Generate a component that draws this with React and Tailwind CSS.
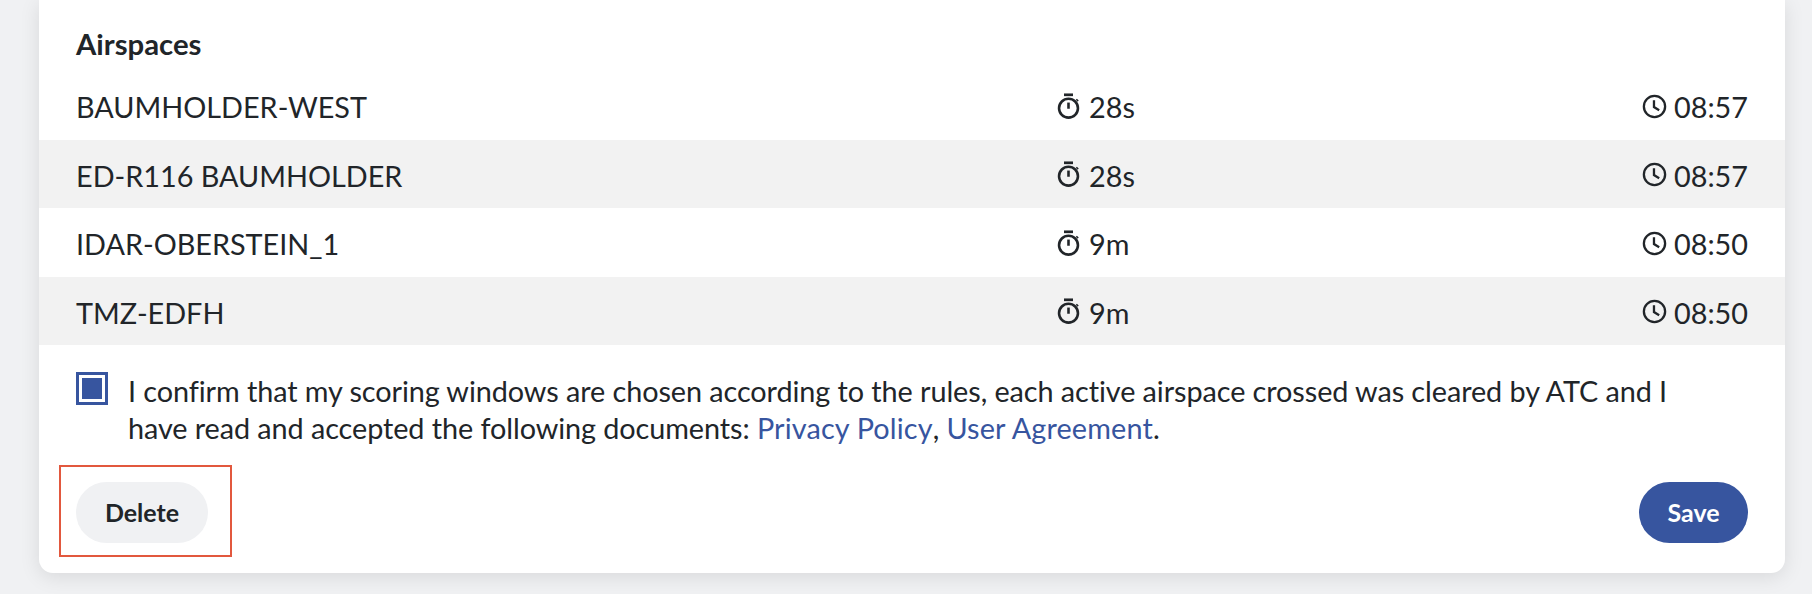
const AIRSPACES = [
  { name: "BAUMHOLDER-WEST", duration: "28s", time: "08:57" },
  { name: "ED-R116 BAUMHOLDER", duration: "28s", time: "08:57" },
  { name: "IDAR-OBERSTEIN_1", duration: "9m", time: "08:50" },
  { name: "TMZ-EDFH", duration: "9m", time: "08:50" },
];

const TimerIcon = () => (
  <svg viewBox="0 0 24 24" className="w-[27px] h-[27px] mr-[7px] -mt-[3px] -ml-[1px]" fill="none" stroke="currentColor" strokeWidth="2.3">
    <path d="M8 1.6h8" strokeWidth="2.4" />
    <circle cx="12" cy="13.5" r="8.4" />
    <path d="M12 8.5v5.5" />
    <path d="M19 5.6l1.6 1.6" strokeWidth="1.4" />
  </svg>
);

const ClockIcon = () => (
  <svg viewBox="0 0 24 24" className="w-[25px] h-[25px] mr-[7px] -mt-[3px]" fill="none" stroke="currentColor" strokeWidth="2.2">
    <circle cx="12" cy="12" r="10.2" />
    <path d="M11.5 6v6.5l5 3" />
  </svg>
);

export default function App() {
  return (
    <div className="h-[594px] overflow-hidden bg-[#f0f1f3] pl-[39px] pr-[27px] font-['Lato','Liberation_Sans',sans-serif] text-[#212529]">
      <div className="relative bg-white rounded-b-[14px] shadow-[0_4px_20px_rgba(0,0,0,0.1)] h-[573px] pt-[26px]">
        <h2 className="px-[37px] text-[29.3px] leading-[36px] font-bold">Airspaces</h2>

        <div className="mt-[9px] text-[28.8px]">
          {AIRSPACES.map((a, i) => (
            <div
              key={a.name}
              className={`grid grid-cols-[1fr_auto] items-center h-[68.5px] px-[37px] pt-[5px] ${i % 2 === 1 ? "bg-[#f2f2f2]" : ""}`}
            >
              <div className="flex items-center">
                <span className="w-[980px]">{a.name}</span>
                <span className="flex items-center">
                  <TimerIcon />
                  {a.duration}
                </span>
              </div>
              <span className="flex items-center">
                <ClockIcon />
                {a.time}
              </span>
            </div>
          ))}
        </div>

        <div className="flex mt-[27px] px-[37px]">
          <span className="shrink-0 w-[32px] h-[33px] border-[3px] border-[#37559f] p-[3px] mr-[20px]">
            <span className="block h-full bg-[#37559f]"></span>
          </span>
          <p className="text-[28.8px] leading-[37px] mt-[1px] w-[1560px] tracking-[-0.07px]">
            I confirm that my scoring windows are chosen according to the rules, each active airspace crossed was cleared by ATC and I have read and accepted the following documents:{" "}
            <a className="text-[#37559f] tracking-[0.15px]">Privacy Policy</a>, <a className="text-[#37559f] tracking-[0.15px]">User Agreement</a>.
          </p>
        </div>

        <div className="flex justify-between mt-[35px] px-[37px]">
          <button className="h-[61px] w-[132px] rounded-full bg-[#f0f1f3] text-[25px] font-bold">Delete</button>
          <button className="h-[61px] w-[109px] rounded-full bg-[#37559f] text-white text-[25px] font-bold">Save</button>
        </div>

        {/* annotation box round the delete button */}
        <div className="absolute left-[20px] top-[465px] w-[173px] h-[92px] border-2 border-[#e2583e]"></div>
      </div>
    </div>
  );
}
